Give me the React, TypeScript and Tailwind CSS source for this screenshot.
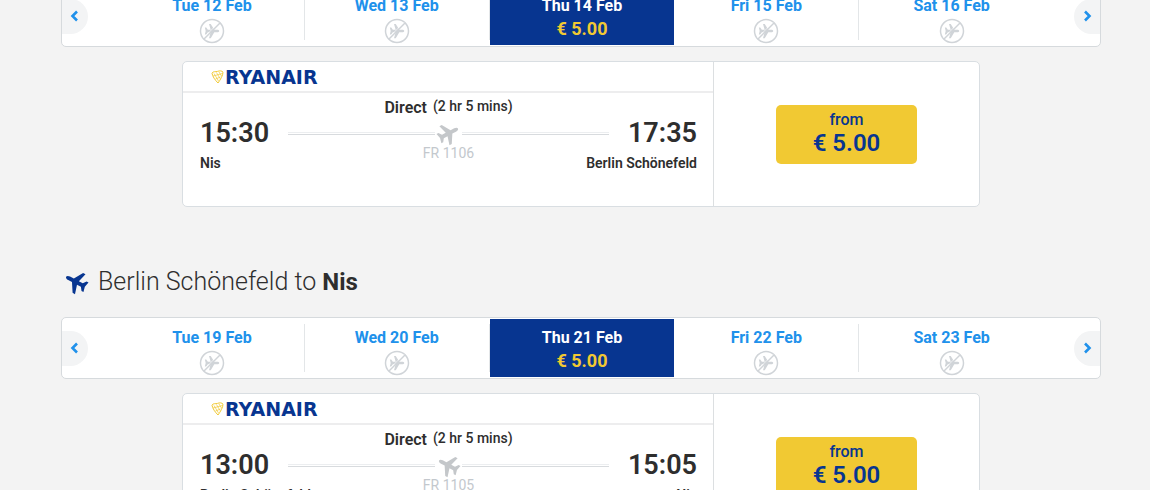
import React, { useState } from 'react';

interface FareDay {
  label: string;
  price?: string;
}

interface Flight {
  departs: string;
  arrives: string;
  from: string;
  to: string;
  duration: string;
  number: string;
  price: string;
  inbound?: boolean;
}

// nose-up aircraft on a 24 unit grid
const PLANE =
  'M12 .8c1.200 0 2 1.600 2 3.400v4.300l9.200 5.600v2.700L14 14.200v4.400l3.400 2.500v2.200L12 22l-5.400 1.300v-2.200l3.400-2.500v-4.400L.8 16.800v-2.700L10 8.500V4.200C10 2.400 10.800.8 12 .8z';

const outboundDays: FareDay[] = [
  { label: 'Tue 12 Feb' },
  { label: 'Wed 13 Feb' },
  { label: 'Thu 14 Feb', price: '€ 5.00' },
  { label: 'Fri 15 Feb' },
  { label: 'Sat 16 Feb' },
];

const inboundDays: FareDay[] = [
  { label: 'Tue 19 Feb' },
  { label: 'Wed 20 Feb' },
  { label: 'Thu 21 Feb', price: '€ 5.00' },
  { label: 'Fri 22 Feb' },
  { label: 'Sat 23 Feb' },
];

const outboundFlight: Flight = {
  departs: '15:30',
  arrives: '17:35',
  from: 'Nis',
  to: 'Berlin Schönefeld',
  duration: '(2 hr 5 mins)',
  number: 'FR 1106',
  price: '€ 5.00',
};

const inboundFlight: Flight = {
  departs: '13:00',
  arrives: '15:05',
  from: 'Berlin Schönefeld',
  to: 'Nis',
  duration: '(2 hr 5 mins)',
  number: 'FR 1105',
  price: '€ 5.00',
  inbound: true,
};

function PlaneIcon({ angle, className }: { angle: number; className: string }) {
  return (
    <svg viewBox="0 0 24 24" className={className} fill="currentColor" overflow="visible" aria-hidden="true">
      <path d={PLANE} transform={`rotate(${angle} 12 12)`} />
    </svg>
  );
}

function NoFlightIcon() {
  return (
    <svg viewBox="0 0 26 26" className="size-[26px] shrink-0 text-[#d0d4d8]" role="img" aria-label="No flights">
      <circle cx="13" cy="13" r="11.5" fill="none" stroke="currentColor" strokeWidth="1.5" />
      <path d={PLANE} transform="translate(5.400 5.400) scale(.64) rotate(90 12 12)" fill="currentColor" />
      <path d="M4.500 20 20 4.500" stroke="#fff" strokeWidth=".8" />
      <path d="M5 21 21 5" stroke="currentColor" strokeWidth="1.5" />
    </svg>
  );
}

function Chevron({ d }: { d: string }) {
  return (
    <svg viewBox="0 0 12 12" className="size-3" fill="none" stroke="currentColor" strokeWidth="2.6" aria-hidden="true">
      <path d={d} />
    </svg>
  );
}

function HarpIcon() {
  return (
    <svg viewBox="0 0 13 14" className="h-[14px] w-[13px] shrink-0" fill="none" stroke="#f1c933" strokeWidth="1" aria-hidden="true">
      <path d="M1 3.200C2.200.8 4.500 2.200 6.500 1.400s4.500-.8 5.500.8C12 5.500 9.500 9.500 7 13 4 10 1.500 6.500 1 3.200z" />
      <path d="M3 3.500 7.500 11M5.500 2.500l3.500 6M8 2l2.500 4M2 6l9.500-2.500M4.500 9l5-2" strokeWidth=".7" />
    </svg>
  );
}

function DateStrip({ days }: { days: FareDay[] }) {
  const [selected, setSelected] = useState(2);

  return (
    <div className="flex h-[62px] items-center overflow-hidden rounded-[5px] border border-[#d6dadd] bg-white">
      <button
        type="button"
        aria-label="Previous dates"
        className="flex h-[35px] w-[26px] shrink-0 items-center justify-center rounded-r-full bg-[#f3f4f5] text-[#2091eb]"
      >
        <Chevron d="M8 1.500 3.500 6 8 10.500" />
      </button>
      <div className="mr-[30px] ml-8 grid h-full flex-1 grid-cols-5 items-center">
        {days.map((day, i) => (
          <button
            key={day.label}
            type="button"
            onClick={() => setSelected(i)}
            aria-pressed={i === selected}
            className={
              i === selected
                ? 'flex h-[58px] flex-col items-center bg-[#073590] pt-[7px] text-white'
                : 'flex h-12 flex-col items-center border-r border-[#e3e6e8] pt-[2px] text-[#2091eb] last:border-r-0'
            }
          >
            <span className="text-[16px] leading-[24px] font-bold">{day.label}</span>
            {day.price ? (
              <span className="text-[18px] leading-[22px] font-bold text-[#f1c933]">{day.price}</span>
            ) : (
              <NoFlightIcon />
            )}
          </button>
        ))}
      </div>
      <button
        type="button"
        aria-label="Next dates"
        className="flex h-[35px] w-[26px] shrink-0 items-center justify-center rounded-l-full bg-[#f3f4f5] text-[#2091eb]"
      >
        <Chevron d="M4 1.500 8.500 6 4 10.500" />
      </button>
    </div>
  );
}

function RouteLine() {
  return <div className="h-[3px] flex-1 border-y border-t-[#eceef0] border-b-[#d8dbde]" />;
}

function FlightCard({ flight }: { flight: Flight }) {
  return (
    <article className="mx-[121px] flex h-[146px] rounded-[5px] border border-[#d9dee2] bg-white">
      <div className="flex-1 border-r border-[#dcdfe1]">
        <div className="flex h-[31px] items-center border-b-2 border-[#ededee] pl-7">
          <HarpIcon />
          <span className="ml-px font-['DejaVu_Sans'] text-[19px] leading-[18px] font-bold text-[#073590]">RYANAIR</span>
        </div>
        <div className="pt-[2px] pr-4 pl-[17px]">
          <div className="flex items-start justify-center gap-1.5">
            <span className="text-[16px] leading-[26px] font-semibold">Direct</span>
            <span className="text-[14px] leading-[22px] font-medium">{flight.duration}</span>
          </div>
          <div className="flex h-6 items-center gap-[19px]">
            <time className="text-[27px] leading-[26px] font-semibold">{flight.departs}</time>
            <div className="flex flex-1 items-center gap-0.5">
              <RouteLine />
              <PlaneIcon angle={flight.inbound ? -62 : 62} className="size-[23px] shrink-0 text-[#c4c7ca]" />
              <RouteLine />
            </div>
            <time className="text-[27px] leading-[26px] font-semibold">{flight.arrives}</time>
          </div>
          <div className="grid grid-cols-3 text-[14px]">
            <span className="pt-2 leading-[20px] font-semibold">{flight.from}</span>
            <span className="text-center leading-[16px] text-[#c3c8cd]">{flight.number}</span>
            <span className="pt-2 text-right leading-[20px] font-semibold">{flight.to}</span>
          </div>
        </div>
      </div>
      <div className="flex w-[265px] items-center justify-center">
        <button
          type="button"
          className="flex h-[59px] w-[141px] flex-col items-center rounded-[5px] bg-[#f1c933] pt-[5px] text-[#073590]"
        >
          <span className="text-[16px] leading-[20px] font-medium">from</span>
          <span className="text-[24px] leading-[26px] font-semibold">{flight.price}</span>
        </button>
      </div>
    </article>
  );
}

export default function App() {
  return (
    <main className="h-screen overflow-hidden bg-[#f3f3f3] pr-[49px] pl-[61px] font-['Roboto',sans-serif] text-[#2e2e2e]">
      <section className="-mt-[15px] flex flex-col gap-[14px]">
        <DateStrip days={outboundDays} />
        <FlightCard flight={outboundFlight} />
      </section>
      <section className="mt-[58px] flex flex-col gap-[14px]">
        <h2 className="mb-1 flex h-[34px] items-center gap-[10px] pl-[3px] text-[25px] leading-[34px] font-light">
          <PlaneIcon angle={-62} className="size-6 text-[#073590]" />
          <span>
            Berlin Schönefeld to <strong className="text-[24px] font-bold">Nis</strong>
          </span>
        </h2>
        <DateStrip days={inboundDays} />
        <FlightCard flight={inboundFlight} />
      </section>
    </main>
  );
}
